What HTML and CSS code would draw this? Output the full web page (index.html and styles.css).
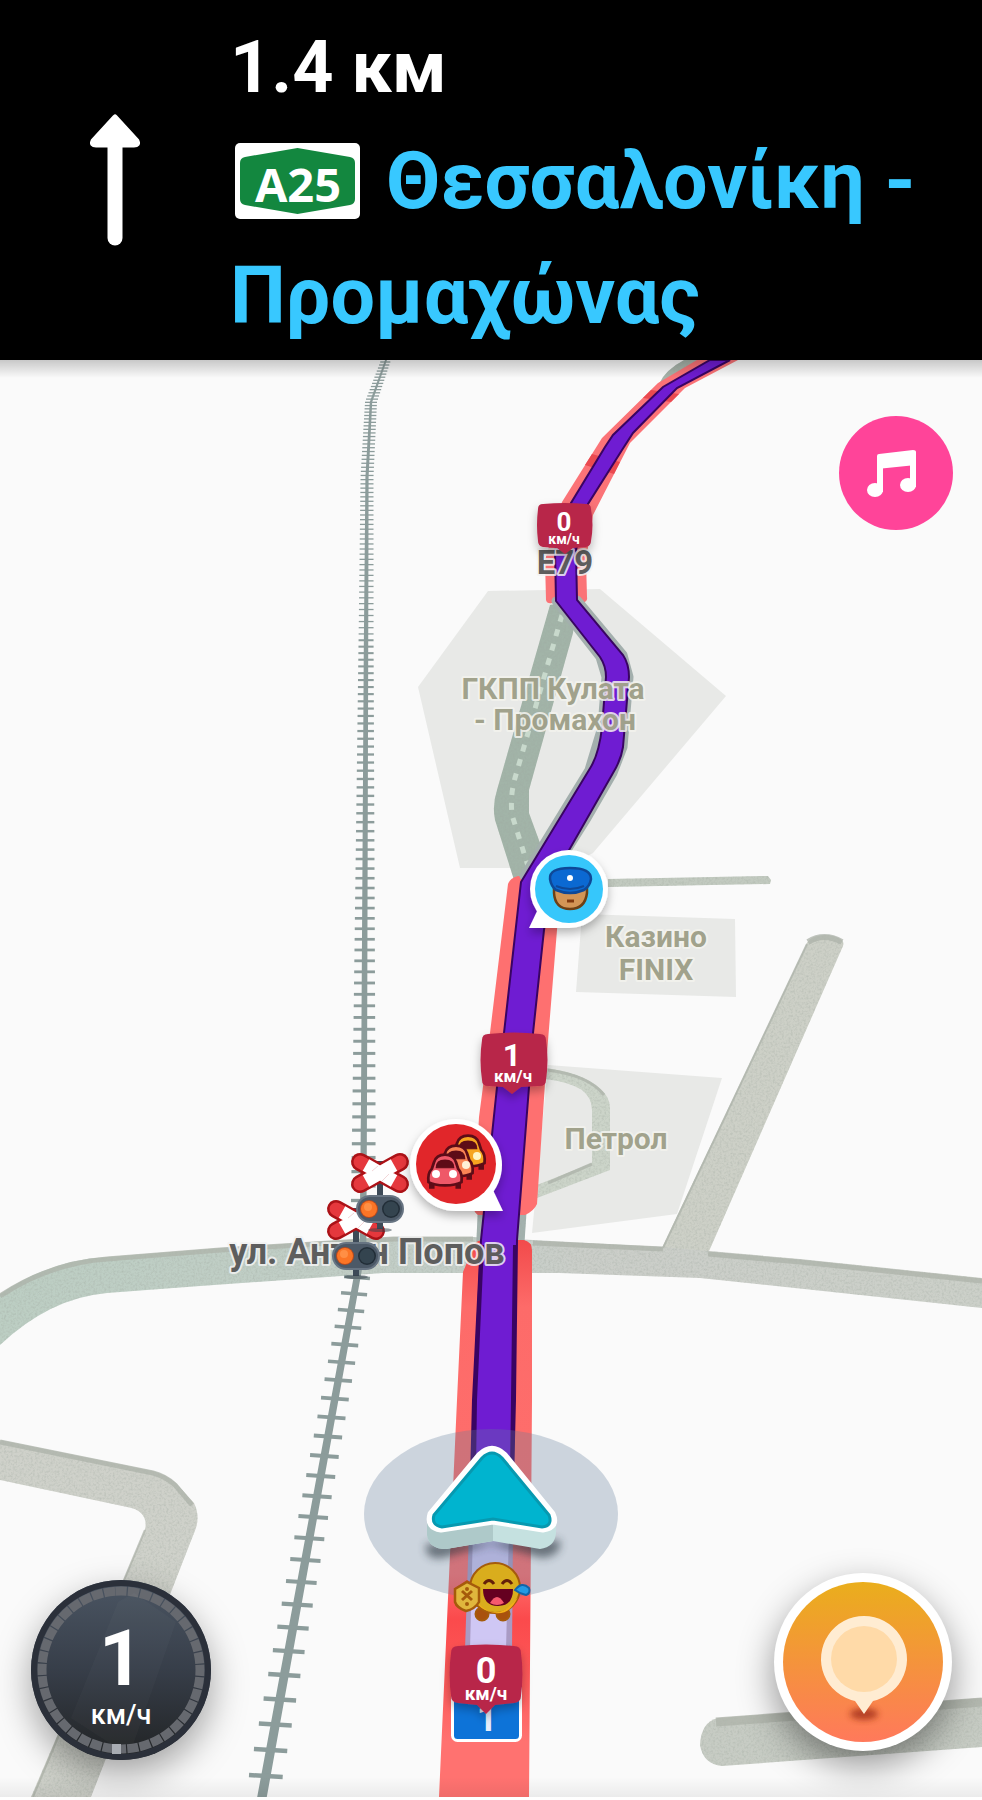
FILE: index.html
```html
<!DOCTYPE html>
<html lang="bg">
<head>
<meta charset="utf-8">
<meta name="viewport" content="width=device-width, initial-scale=1">
<title>Навигация</title>
<link rel="stylesheet" href="styles.css">
</head>
<body>
<main class="app">
  <header class="guidance">
    <svg class="turn-arrow" viewBox="0 0 52 132" aria-label="Направо">
      <path d="M26 30V124" stroke="#fff" stroke-width="15" stroke-linecap="round"/>
      <path d="M26 3 4 27Q2 31 7 31H45Q50 31 48 27Z" fill="#fff" stroke="#fff" stroke-width="5" stroke-linejoin="round"/>
    </svg>
    <div class="instruction">
      <p class="distance">1.4 км</p>
      <h1 class="street"><svg class="shield" viewBox="0 0 125 76">
        <rect width="125" height="76" rx="5" fill="#fff"/>
        <path d="M62.500 5 115 14Q120 15 120 20V56Q120 61 115 62L62.500 71 10 62Q5 61 5 56V20Q5 15 10 14Z" fill="#13873f"/>
        <text class="shield-text" x="63" y="59">A25</text>
      </svg>Θεσσαλονίκη - Προμαχώνας</h1>
    </div>
  </header>

  <section class="map">
    <svg class="map-canvas" viewBox="0 360 982 1440">
      <defs>
        <linearGradient id="topShade" x1="0" y1="0" x2="0" y2="1"><stop offset="0" stop-color="#000" stop-opacity=".2"/><stop offset="1" stop-color="#000" stop-opacity="0"/></linearGradient>
        <linearGradient id="bottomShade" x1="0" y1="0" x2="0" y2="1"><stop offset="0" stop-color="#000" stop-opacity="0"/><stop offset="1" stop-color="#000" stop-opacity=".06"/></linearGradient>
        <linearGradient id="crossFill" gradientUnits="userSpaceOnUse" x1="0" y1="0" x2="982" y2="0"><stop offset="0" stop-color="#bccec3"/><stop offset=".45" stop-color="#c3cec7"/><stop offset=".6" stop-color="#cbcec9"/><stop offset="1" stop-color="#ccd0c9"/></linearGradient>
        <linearGradient id="redLower" gradientUnits="userSpaceOnUse" x1="0" y1="1240" x2="0" y2="1797"><stop offset="0" stop-color="#f24a4b"/><stop offset=".12" stop-color="#fd6b69"/><stop offset=".6" stop-color="#ff6f6d"/><stop offset=".68" stop-color="#fb4a4c"/><stop offset=".8" stop-color="#fd5a5a"/><stop offset=".9" stop-color="#ff7270"/></linearGradient>
        <filter id="grain" x="0" y="0" width="100%" height="100%">
          <feTurbulence type="fractalNoise" baseFrequency=".45" numOctaves="2" seed="4"/>
          <feColorMatrix values="0 0 0 0 .35  0 0 0 0 .4  0 0 0 0 .35  .9 0 0 0 -.37"/>
          <feComposite in2="SourceGraphic" operator="in" result="n"/>
          <feMerge><feMergeNode in="SourceGraphic"/><feMergeNode in="n"/></feMerge>
        </filter>
        <filter id="drop" x="-30%" y="-30%" width="160%" height="170%"><feDropShadow dx="0" dy="5" stdDeviation="5" flood-opacity=".28"/></filter>
        <filter id="soft" x="-30%" y="-60%" width="160%" height="220%"><feGaussianBlur stdDeviation="4"/></filter>
        <g id="crossing">
          <path d="M0 -12V56" stroke="#3d4a57" stroke-width="6"/>
          <ellipse cx="0" cy="57" rx="12" ry="2" fill="#33404a" opacity=".5"/>
          <g stroke-linecap="round">
            <path d="M-20 -11 20 11M-20 11 20 -11" stroke="#ab1217" stroke-width="18"/>
            <path d="M-20 -11 20 11M-20 11 20 -11" stroke="#e5383d" stroke-width="13"/>
          </g>
          <path d="M-14 -8 14 8M-14 8 14 -8" stroke="#fff" stroke-width="13"/>
          <path d="M-8 -2 -2 -7M2 8 9 1" stroke="#f2d6d8" stroke-width="1" fill="none"/>
          <rect x="-24" y="22" width="48" height="28" rx="14" fill="#677482"/>
          <rect x="-22" y="24" width="44" height="24" rx="12" fill="#4c5967"/>
          <circle cx="-11" cy="36" r="9" fill="#b8481c"/><circle cx="-11" cy="36" r="8" fill="#fb7526"/><circle cx="-12" cy="34" r="4" fill="#ff8f45"/>
          <circle cx="11" cy="36" r="9" fill="#222e38"/><circle cx="11" cy="36" r="7.500" fill="#34444f"/>
        </g>
        <g id="car" stroke="#5d0c17" stroke-width="2.500">
          <path d="M-12 10V17M12 10V17" stroke-width="5"/>
          <path d="M-10 -7Q-8 -14 0 -14T10 -7L12 -1Q16 3 15 11Q10 14 0 14T-15 11Q-16 3 -12 -1Z"/>
          <path d="M-8 -2Q-8 -9 0 -9T8 -2Z" fill="#5d0c17" stroke-width="1"/>
        </g>
      </defs>

      <!-- areas -->
      <g fill="#e8e9e7">
        <path d="M488 591 600 589 726 696 593 853 565 868H460L418 687Z"/>
        <path d="M582 914 735 919 736 997 576 992Z"/>
        <path d="M548 1065 722 1078 677 1214 532 1233Z"/>
      </g>

      <!-- roads -->
      <g filter="url(#grain)">
        <path d="M608 879 768 876 771 880 770 884 608 887Z" fill="#c2cac0"/>
        <path d="M545 1068Q580 1072 598 1087Q610 1096 610 1108V1170L537 1198V1185L592 1163V1110Q592 1098 582 1090Q570 1082 545 1079Z" fill="#ccd4c9"/>
        <path d="M806 945Q810 934 828 935Q846 938 843 946L706 1258 660 1252Z" fill="#cdd0c7"/>
        <path d="M0 1294Q50 1260 107 1257L220 1248 393 1237H473L533 1240 663 1247 800 1259 982 1278V1308L700 1278 560 1273H383L200 1286 107 1293Q50 1298 0 1345Z" fill="url(#crossFill)"/>
        <path d="M0 1440 153 1471Q165 1474 176 1483L194 1503Q200 1515 196 1528L91 1797H31L145 1530Q149 1511 127 1507L0 1480Z" fill="#cfd1ca"/>
        <path d="M718 1718 982 1698V1747L722 1766Q703 1764 700 1745Q701 1722 718 1718Z" fill="#c7ccc4"/>
        <path d="M550 605 497 790Q492 805 495 820L514 880 555 860 540 843 529 813V790L573 633 577 600Z" fill="#a2b4a8"/>
        <path d="M700 360H684Q665 370 659 384L668 388 720 360Z" fill="#a7b4aa"/>
        <path d="M478 1205H527L524 1250H476Z" fill="#a3b1ae"/>
      </g>
      <g fill="none" stroke="#adb3aa" stroke-width="5" opacity=".75">
        <path d="M0 1296Q50 1263 107 1259L220 1250 393 1239H473"/>
        <path d="M533 1243 663 1249"/><path d="M708 1254 800 1262 982 1281"/>
        <path d="M0 1442 153 1473Q165 1476 175 1485L192 1505"/>
        <path d="M716 1722 982 1702" stroke-width="9"/>
        <path d="M808 942Q824 932 842 942" stroke-width="6"/>
        <path d="M807 944 663 1248" stroke-width="2"/>
        <path d="M33 1797 145 1530" stroke-width="2"/>
        <path d="M548 1070Q590 1076 604 1095" stroke-width="3"/>
        <path d="M548 1183 592 1164" stroke-width="3"/>
      </g>
      <path d="M562 615 515 778Q510 795 512 815L528 866" fill="none" stroke="#c8d9cc" stroke-width="5" stroke-dasharray="7 8"/>

      <!-- railway, drawn by map.js -->
      <g class="railway" id="railway"></g>

      <!-- traffic -->
      <path d="M697 360 658 383 602 438 562 502 545 560 546 600Q547 604 552 603H582Q588 602 587 597L586 560 593 515 630 443 685 388 738 360Z" fill="#fb7377"/>
      <path d="M651 390 679 394 671 402 643 398ZM592 454 620 462 614 474 585 465Z" fill="#ea4a50"/>
      <path d="M508 884Q510 878 518 876L560 880 557 930 547 1053 537 1204Q534 1211 525 1215H478Q473 1212 474 1205L479 1117 490 1033Z" fill="#fe7070"/>
      <path d="M473 1248Q474 1241 482 1240H524Q532 1242 532 1250V1400L529 1797H439L457 1400 463 1272Z" fill="url(#redLower)"/>
      <!-- route -->
      <path d="M556 601 600 657 606 677 602 727 589 770 524 876 548 880 587 818 613 773 623 747 629 677 623 655 577 600Z" fill="#9aa9a8" stroke="#a3afad" stroke-width="9" stroke-linejoin="round"/>
      <path d="M710 360 663 387 613 435 605 447 571 503 555 550 556 601 600 657Q606 666 606 677L602 727Q599 755 589 770L521 882 504 1033 497 1087 481 1240 473 1400 471 1480H513L515 1400 517 1240 529 1087 533 1033 544 930 552 880 613 773Q621 760 623 747L629 677Q629 664 623 655L577 600 576 550 588 504 622 450 633 433 677 388 730 360Z" fill="#6f1cd2" stroke="#390462" stroke-width="2"/>
      <path d="M482 1245 475 1400 474 1470M515 1245 513 1400 512 1470" fill="none" stroke="#390462" stroke-width="4"/>
      <path d="M469 1530H513L512 1650H465Z" fill="#a99bc4"/>
      <path d="M473 1530H509L506 1650H470Z" fill="#cfc7f4"/>

      <!-- position -->
      <ellipse cx="491" cy="1514" rx="127" ry="85" fill="#647d9b" fill-opacity=".3"/>
      <path d="M426 1544Q424 1560 442 1558L491 1544 542 1558Q562 1556 560 1540Z" fill="#26303a" opacity=".6" filter="url(#soft)"/>
      <path d="M427 1520V1535Q429 1549 446 1549L493 1541 540 1549Q555 1547 556 1533V1520Z" fill="#c5e1e0"/>
      <path d="M427 1520V1535Q429 1549 446 1549L493 1541V1518Z" fill="#aec9c9"/>
      <path d="M480 1455Q492 1444 504 1455L552 1514Q558 1527 543 1529L493 1521 441 1529Q427 1527 431 1514Z" fill="#fff" stroke="#fff" stroke-width="7" stroke-linejoin="round"/>
      <path d="M482 1458Q492 1448 502 1458L549 1515Q553 1526 542 1527L493 1519 442 1527Q431 1525 434 1515Z" fill="#00b4cf" stroke="#0799b0" stroke-width="3"/>

      <!-- waze mood -->
      <g stroke="#a55b0b" stroke-width="2">
        <path d="M455 1588 467 1580 480 1588 479 1605 466 1611 455 1605Z" fill="#d23b39" stroke="none"/>
        <circle cx="482" cy="1614" r="6.500" fill="#a9510d"/><circle cx="503" cy="1614" r="6.500" fill="#a9510d"/>
        <circle cx="495" cy="1588" r="25" fill="#d9ad1d"/>
        <path d="M472 1596Q495 1628 518 1597Q510 1615 495 1613T472 1596Z" fill="#f3b018" stroke="none"/>
        <path d="M483 1589H513Q513 1606 498 1606T483 1589Z" fill="#650020" stroke="none"/>
        <path d="M490 1603Q497 1591 504 1603Q497 1607 490 1603Z" fill="#f5596d" stroke="none"/>
        <path d="M484 1584Q489 1577 494 1584M502 1584Q507 1577 512 1584" fill="none" stroke="#642009" stroke-width="3"/>
        <path d="M515 1590Q522 1581 529 1588Q531 1593 526 1595Q520 1594 515 1590Z" fill="#239ae5" stroke="#1264a8"/>
        <path d="M455 1589 467 1582 479 1588V1602Q475 1609 466 1611Q457 1608 455 1602Z" fill="#e0b63d" stroke-width="2.500"/>
        <path d="M462 1591 472 1600M472 1591 462 1600" stroke-width="3"/><circle cx="467" cy="1589" r="1"/><circle cx="467" cy="1604" r="1"/>
      </g>

      <!-- junction plate -->
      <rect x="452.500" y="1680" width="68" height="60.500" rx="5" fill="#0d73d8" stroke="#fff" stroke-width="3"/>
      <text class="plate-text" x="487" y="1731">1</text>

      <!-- labels -->
      <g class="place">
        <text x="553" y="699">ГКПП Кулата</text>
        <text x="555" y="730">- Промахон</text>
        <text x="656" y="947">Казино</text>
        <text x="656" y="980">FINIX</text>
        <text x="616" y="1149">Петрол</text>
      </g>
      <g class="road-name">
        <text class="short" x="565" y="574">E79</text>
        <text x="367" y="1264">ул. Антон Попов</text>
      </g>

      <use href="#crossing" x="356" y="1220"/>
      <use href="#crossing" x="380" y="1173"/>

      <!-- speed bubbles -->
      <g filter="url(#drop)">
        <path d="M543 504Q565 502 586 504Q591 504 591 509Q594 525 591 541Q591 546 586 547L573 548 565 554 557 548 543 547Q538 546 538 541Q536 525 538 509Q538 504 543 504Z" fill="#b82748"/>
        <path d="M488 1034Q514 1031 540 1034Q546 1034 546 1040Q549 1060 546 1080Q546 1086 540 1086L521 1087 512 1094 503 1087 488 1086Q482 1086 482 1080Q479 1060 482 1040Q482 1034 488 1034Z" fill="#b82748"/>
        <path d="M458 1646Q486 1643 514 1646Q521 1646 521 1653Q524 1674 521 1696Q521 1702 514 1703L495 1705 486 1714 477 1705 458 1703Q451 1702 451 1696Q448 1674 451 1653Q451 1646 458 1646Z" fill="#b82748"/>
      </g>
      <g class="bubble-text">
        <text x="564" y="531" font-size="26">0</text><text x="564" y="544" font-size="14">км/ч</text>
        <text x="512" y="1066" font-size="32">1</text><text x="513" y="1082" font-size="17">км/ч</text>
        <text x="486" y="1683" font-size="36">0</text><text x="486" y="1700" font-size="19">км/ч</text>
      </g>

      <!-- police report -->
      <g>
        <g fill="#fff" filter="url(#drop)"><circle cx="569" cy="889" r="39"/><path d="M529 928 540 905 570 900V928Z"/></g>
        <circle cx="569" cy="889" r="34" fill="#36c7fb"/>
        <path d="M554 885H587V893Q585 909 570 909T554 893Z" fill="#d39556" stroke="#6d4015" stroke-width="2.500"/>
        <path d="M567 901H574" stroke="#81380e" stroke-width="3"/>
        <path d="M550 879Q549 868 570 868T591 879Q590 886 584 890Q570 896 556 890Q551 886 550 879Z" fill="#0b69d2" stroke="#0e4897" stroke-width="2.500"/>
        <path d="M556 886Q570 892 584 886" fill="none" stroke="#0e4897" stroke-width="2"/>
        <circle cx="570" cy="878" r="3" fill="#fff"/>
      </g>
      <!-- traffic report -->
      <g>
        <g fill="#fff" filter="url(#drop)"><circle cx="456" cy="1165" r="46"/><path d="M503 1211 492 1188 456 1180V1211Z"/></g>
        <circle cx="456" cy="1164" r="40" fill="#e1262a"/>
        <use href="#car" transform="translate(468 1151) scale(1.1)" fill="#f6a51f"/><circle cx="477" cy="1156" r="4" fill="#fff5c4"/>
        <use href="#car" transform="translate(456 1161) scale(1.1)" fill="#f98455"/><circle cx="466" cy="1165" r="4" fill="#fff0d8"/>
        <use href="#car" transform="translate(445 1170) scale(1.1)" fill="#ef5868"/>
        <circle cx="436" cy="1174" r="4" fill="#fff"/><circle cx="453" cy="1174" r="4" fill="#fff"/>
      </g>

      <rect x="0" y="360" width="982" height="18" fill="url(#topShade)"/>
      <rect x="0" y="1777" width="982" height="20" fill="url(#bottomShade)"/>
      <rect x="0" y="1797" width="982" height="3" fill="#fff"/>
    </svg>

    <button class="fab music" type="button" aria-label="Музика">
      <svg viewBox="0 0 114 114">
        <path d="M41 76V43L74 39.500V71" fill="none" stroke="#fff" stroke-width="6"/>
        <path d="M38 40Q38 38 40 38L74 34Q77 34 77 36V49L38 53Z" fill="#fff"/>
        <ellipse cx="36" cy="74" rx="8" ry="7" fill="#fff"/><ellipse cx="69" cy="69" rx="8" ry="7" fill="#fff"/>
      </svg>
    </button>

    <div class="speedometer">
      <svg class="dial" viewBox="0 0 180 180">
        <circle cx="90" cy="90" r="79" fill="none" stroke="#66696f" stroke-width="9" stroke-dasharray="11.210 1.200" transform="rotate(-94 90 90)"/>
        <path d="M87 22 103 13 145 42 102 165 80 164 40 138Z" fill="#fff" opacity=".025"/>
        <rect x="81" y="164" width="9" height="10" fill="#a9adb3"/>
      </svg>
      <span class="speed">1</span>
      <span class="unit">км/ч</span>
    </div>

    <button class="fab report" type="button" aria-label="Докладване">
      <svg viewBox="0 0 178 178">
        <defs><linearGradient id="warm" x1="0" y1="0" x2="0" y2="1"><stop offset="0" stop-color="#eaae1c"/><stop offset="1" stop-color="#ff795b"/></linearGradient>
        <filter id="tipBlur" x="-50%" y="-50%" width="200%" height="200%"><feGaussianBlur stdDeviation="3"/></filter></defs>
        <circle cx="89" cy="89" r="80" fill="url(#warm)"/>
        <ellipse cx="90" cy="141" rx="14" ry="6" fill="#9c2a12" opacity=".75" filter="url(#tipBlur)"/>
        <path d="M90 141 81 128A43 43 0 1 1 99 128Z" fill="#ffecd2"/>
        <circle cx="90" cy="86" r="33" fill="#ffdaa8"/>
      </svg>
    </button>
  </section>
</main>
<script src="map.js"></script>
</body>
</html>
```

FILE: styles.css
```css
* {
  box-sizing: border-box;
}

body {
  margin: 0;
  background: #fff;
  font-family: Roboto, "Noto Sans", sans-serif;
}

.guidance {
  display: grid;
  grid-template-columns: 230px 1fr;
  align-items: center;
  background: #000;
}

.turn-arrow {
  width: 52px;
  justify-self: center;
}

.instruction {
  display: flex;
  flex-direction: column;
  gap: 14px;
  padding: 26px 0 6px;
}

.distance {
  margin: 0;
  color: #fff;
  font-size: 72px;
  font-weight: 700;
  line-height: 84px;
}

.street {
  margin: 0;
  color: #38c8ff;
  font-size: 79px;
  font-weight: 700;
  line-height: 115px;
}

.shield {
  width: 125px;
  height: 76px;
  margin: 0 26px 0 5px;
  vertical-align: -11px;
}

.shield-text {
  fill: #fff;
  font: 700 47px "Open Sans", "Noto Sans", sans-serif;
  text-anchor: middle;
}

.map {
  position: relative;
  overflow: hidden;
  background: #fafafa;
}

.map-canvas {
  display: block;
  width: 100%;
}

.map-canvas text {
  text-anchor: middle;
  font-weight: 700;
}

.railway {
  fill: #8c9c9b;
  stroke: #8c9c9b;
}

.place {
  fill: #9c9d86;
  stroke: #f3f3ee;
  stroke-width: 4px;
  stroke-linejoin: round;
  paint-order: stroke;
  font-size: 30px;
}

.road-name {
  fill: #555;
  stroke: #f2f2f2;
  stroke-width: 4px;
  stroke-linejoin: round;
  paint-order: stroke;
  font-size: 36px;
}

.road-name .short {
  font-size: 33px;
}

.road-name text,
.place text {
  fill-opacity: 0.95;
  stroke-opacity: 0.85;
}

.bubble-text {
  fill: #fff;
}

.plate-text {
  fill: #e6eefb;
  font-size: 36px;
}

.fab {
  position: absolute;
  padding: 0;
  border: 0;
  border-radius: 50%;
  cursor: pointer;
}

.fab svg {
  display: block;
  width: 100%;
}

.music {
  top: 56px;
  right: 29px;
  width: 114px;
  background: #ff4499;
}

.report {
  right: 30px;
  bottom: 49px;
  width: 178px;
  background: #fff;
  box-shadow: 0 14px 36px rgba(0, 0, 0, 0.42);
}

.speedometer {
  position: absolute;
  left: 31px;
  bottom: 40px;
  display: flex;
  flex-direction: column;
  align-items: center;
  width: 180px;
  height: 180px;
  padding-top: 37px;
  border-radius: 50%;
  background: linear-gradient(#47515e 10%, #373e49 50%, #25282b 90%);
  box-shadow: inset 0 0 0 6px #2b303a, 0 14px 36px rgba(0, 0, 0, 0.36);
  color: #fff;
}

.dial {
  position: absolute;
  inset: 0;
}

.speed {
  font-size: 77px;
  font-weight: 700;
  line-height: 84px;
}

.unit {
  font-size: 27px;
  font-weight: 500;
  line-height: 28px;
}
```

FILE: map.js
```js
// Draws the railway: a tapering rail with sleepers that spread out towards the viewer.
const NS = "http://www.w3.org/2000/svg";
const layer = document.getElementById("railway");

const track = [[360, 386], [402, 371], [477, 367], [650, 366], [1100, 364], [1245, 363], [1797, 262]];
const spacing = [[360, 3], [400, 3.2], [540, 5], [640, 6.4], [1100, 13], [1290, 16.5], [1797, 27]];
const reach = [[360, 5], [400, 6], [640, 7.5], [1100, 11.5], [1290, 13], [1797, 17]];
const rail = [[360, 1], [480, 1.6], [640, 2.2], [1100, 3], [1290, 3.5], [1797, 4.8]];

function at(table, y) {
  for (let i = 1; i < table.length; i++) {
    const [y0, v0] = table[i - 1];
    const [y1, v1] = table[i];
    if (y <= y1) return v0 + (v1 - v0) * (y - y0) / (y1 - y0);
  }
  return table[table.length - 1][1];
}

function add(name, attributes) {
  const node = document.createElementNS(NS, name);
  for (const key in attributes) node.setAttribute(key, attributes[key]);
  layer.appendChild(node);
}

const left = track.map(([y, x]) => `${x - at(rail, y)},${y}`);
const right = track.map(([y, x]) => `${x + at(rail, y)},${y}`).reverse();
add("polygon", { points: left.concat(right).join(" "), stroke: "none" });

for (let y = 362; y < 1797; y += at(spacing, y)) {
  const x = at(track, y);
  const r = at(reach, y);
  const tilt = y > 1260 ? 1 : 0;
  add("line", { x1: x - r, y1: y - tilt, x2: x + r, y2: y + tilt, "stroke-width": y < 640 ? 1.3 : r / 3.7 });
}
```
